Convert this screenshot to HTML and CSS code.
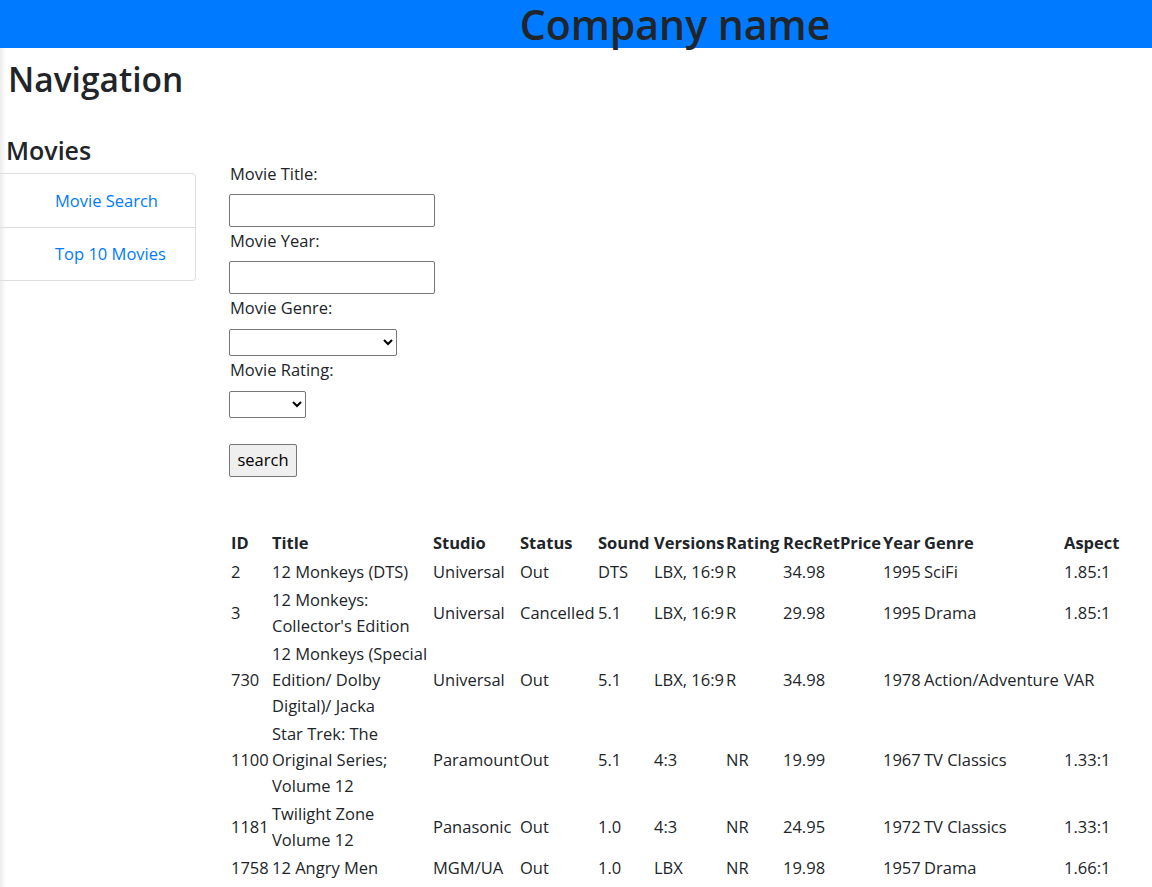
FILE: index.html
```html
<!DOCTYPE html>
<html lang="en">
<head>
<meta charset="utf-8">
<title>Movies</title>
<link rel="stylesheet" href="styles.css">
</head>
<body>
<header class="topbar">
  <h1 class="brand">Company name</h1>
</header>
<h2 class="nav-title">Navigation</h2>
<div class="layout">
  <aside class="sidebar">
    <h4 class="side-heading">Movies</h4>
    <ul class="list-group">
      <li class="list-item"><a href="#">Movie Search</a></li>
      <li class="list-item"><a href="#">Top 10 Movies</a></li>
    </ul>
  </aside>
  <main class="content">
    <form class="search-form">
      <label class="field-label" for="title">Movie Title:</label>
      <input class="text-input" id="title" type="text">
      <label class="field-label" for="year">Movie Year:</label>
      <input class="text-input" id="year" type="text">
      <label class="field-label" for="genre">Movie Genre:</label>
      <select class="select genre-select" id="genre"><option></option></select>
      <label class="field-label" for="rating">Movie Rating:</label>
      <select class="select rating-select" id="rating"><option></option></select>
      <button class="search-btn" type="button">search</button>
    </form>
    <table class="movies">
      <colgroup>
        <col class="c-id"><col class="c-title"><col class="c-studio"><col class="c-status"><col class="c-sound"><col class="c-versions"><col class="c-rating"><col class="c-price"><col class="c-year"><col class="c-genre"><col class="c-aspect">
      </colgroup>
      <thead>
        <tr><th>ID</th><th>Title</th><th>Studio</th><th>Status</th><th>Sound</th><th>Versions</th><th>Rating</th><th>RecRetPrice</th><th>Year</th><th>Genre</th><th>Aspect</th></tr>
      </thead>
      <tbody>
        <tr><td>2</td><td class="title-cell">12 Monkeys (DTS)</td><td>Universal</td><td>Out</td><td>DTS</td><td>LBX, 16:9</td><td>R</td><td>34.98</td><td>1995</td><td>SciFi</td><td>1.85:1</td></tr>
        <tr><td>3</td><td class="title-cell">12 Monkeys: Collector's Edition</td><td>Universal</td><td>Cancelled</td><td>5.1</td><td>LBX, 16:9</td><td>R</td><td>29.98</td><td>1995</td><td>Drama</td><td>1.85:1</td></tr>
        <tr><td>730</td><td class="title-cell">12 Monkeys (Special Edition/ Dolby Digital)/ Jacka</td><td>Universal</td><td>Out</td><td>5.1</td><td>LBX, 16:9</td><td>R</td><td>34.98</td><td>1978</td><td>Action/Adventure</td><td>VAR</td></tr>
        <tr><td>1100</td><td class="title-cell">Star Trek: The Original Series; Volume 12</td><td>Paramount</td><td>Out</td><td>5.1</td><td>4:3</td><td>NR</td><td>19.99</td><td>1967</td><td>TV Classics</td><td>1.33:1</td></tr>
        <tr><td>1181</td><td class="title-cell">Twilight Zone Volume 12</td><td>Panasonic</td><td>Out</td><td>1.0</td><td>4:3</td><td>NR</td><td>24.95</td><td>1972</td><td>TV Classics</td><td>1.33:1</td></tr>
        <tr><td>1758</td><td class="title-cell">12 Angry Men</td><td>MGM/UA</td><td>Out</td><td>1.0</td><td>LBX</td><td>NR</td><td>19.98</td><td>1957</td><td>Drama</td><td>1.66:1</td></tr>
      </tbody>
    </table>
  </main>
</div>
</body>
</html>
```

FILE: styles.css
```css
* { box-sizing: border-box; }

html, body {
  margin: 0;
  padding: 0;
}

body {
  font-family: "Open Sans", "Noto Sans", "Liberation Sans", sans-serif;
  font-size: 16.5px;
  line-height: 1.5;
  color: #212529;
  background: linear-gradient(to right, #ececec 0px, #ffffff 6px) #fff;
  min-height: 887px;
}

.topbar {
  height: 48px;
  background: #007bff;
  padding-left: 198px;
  text-align: center;
}

.brand {
  margin: 0;
  font-size: 41px;
  font-weight: 600;
  line-height: 48px;
  color: #212529;
}

.nav-title {
  margin: 11px 0 0 8px;
  font-size: 33.5px;
  font-weight: 600;
  line-height: 40px;
}

.layout {
  display: flex;
  margin-top: 36px;
}

.sidebar {
  width: 196px;
  flex: none;
}

.side-heading {
  margin: 0 0 0 6px;
  font-size: 25px;
  font-weight: 600;
  line-height: 30px;
}

.list-group {
  list-style: none;
  margin: 8px 0 0 0;
  padding: 0;
  border: 1px solid #dfdfdf;
  border-left: none;
  border-radius: 0 4px 4px 0;
}

.list-item {
  height: 53px;
  padding-left: 55px;
  padding-top: 1px;
  display: flex;
  align-items: center;
}

.list-item + .list-item {
  border-top: 1px solid #dfdfdf;
}

.list-item a {
  color: #007bff;
  text-decoration: none;
}

.content {
  flex: 1;
  padding-left: 33px;
  padding-top: 27px;
}

.search-form {
  display: flex;
  flex-direction: column;
  align-items: flex-start;
}

.field-label {
  display: block;
  margin-left: 1px;
  line-height: 24px;
  margin-bottom: 8px;
}

.text-input {
  width: 206px;
  height: 33px;
  border: 1px solid #767676;
  border-radius: 2px;
  margin: 0 0 2px 0;
  padding: 1px 2px;
  font: inherit;
}

.select {
  height: 27px;
  border: 1px solid #767676;
  border-radius: 2px;
  background: #fff;
  margin: 1px 0 2px 0;
  font-family: inherit;
  font-size: 13px;
}

.genre-select { width: 168px; }
.rating-select { width: 77px; }

.search-btn {
  margin-top: 24px;
  width: 68px;
  height: 33px;
  background: #efefef;
  border: 1px solid #767676;
  border-radius: 2px;
  font: inherit;
  color: #000;
  padding: 0;
}

.movies {
  margin-top: 52px;
  margin-left: 2px;
  border-collapse: collapse;
  table-layout: fixed;
  width: 899px;
}

.movies th,
.movies td {
  padding: 1px 0;
  text-align: left;
  vertical-align: middle;
  line-height: 26px;
}

.movies th {
  font-weight: 700;
  padding-bottom: 2px;
}

.movies .title-cell {
  padding-right: 2px;
}

.c-id { width: 41px; }
.c-title { width: 161px; }
.c-studio { width: 87px; }
.c-status { width: 78px; }
.c-sound { width: 56px; }
.c-versions { width: 72px; }
.c-rating { width: 57px; }
.c-price { width: 100px; }
.c-year { width: 41px; }
.c-genre { width: 140px; }
.c-aspect { width: 66px; }
```
